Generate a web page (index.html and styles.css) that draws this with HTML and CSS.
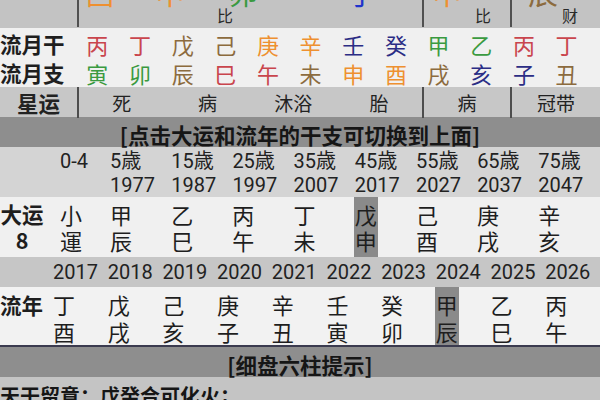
FILE: index.html
```html
<!DOCTYPE html>
<html lang="zh">
<head>
<meta charset="utf-8">
<title>八字排盘</title>
<link rel="stylesheet" href="styles.css">
</head>
<body>
<div class="page">
  <div class="top">
    <div class="tc"></div>
    <div class="tc">
      <span class="big orange t-a">酉</span>
      <span class="big orange t-b">申</span>
      <span class="ss t-c">比</span>
      <span class="big green t-d">卯</span>
      <span class="big blue t-e">子</span>
    </div>
    <div class="tc">
      <span class="big orange t-f">申</span>
      <span class="ss t-g">比</span>
    </div>
    <div class="tc last">
      <span class="big brown t-h">辰</span>
      <span class="ss t-i">财</span>
    </div>
  </div>

  <div class="ly ly1">
    <div class="lab">流月干</div>
    <span class="c red">丙</span><span class="c red">丁</span><span class="c brown">戊</span><span class="c brown">己</span>
    <span class="c orange">庚</span><span class="c orange">辛</span><span class="c navy">壬</span><span class="c navy">癸</span>
    <span class="c green">甲</span><span class="c green">乙</span><span class="c red">丙</span><span class="c red">丁</span>
  </div>
  <div class="ly ly2">
    <div class="lab">流月支</div>
    <span class="c green">寅</span><span class="c green">卯</span><span class="c brown">辰</span><span class="c red">巳</span>
    <span class="c red">午</span><span class="c brown">未</span><span class="c orange">申</span><span class="c orange">酉</span>
    <span class="c brown">戌</span><span class="c navy">亥</span><span class="c navy">子</span><span class="c brown">丑</span>
  </div>

  <div class="xy">
    <div class="xc xlab">星运</div>
    <div class="xc xmain"><span>死</span><span>病</span><span>沐浴</span><span>胎</span></div>
    <div class="xc"><span>病</span></div>
    <div class="xc last"><span>冠带</span></div>
  </div>

  <div class="bar bar1">[点击大运和流年的干支可切换到上面]</div>

  <div class="dy ages">
    <div class="dlab"></div>
    <div class="ac">0-4<br>&nbsp;</div>
    <div class="ac">5歳<br>1977</div>
    <div class="ac">15歳<br>1987</div>
    <div class="ac">25歳<br>1997</div>
    <div class="ac">35歳<br>2007</div>
    <div class="ac">45歳<br>2017</div>
    <div class="ac">55歳<br>2027</div>
    <div class="ac">65歳<br>2037</div>
    <div class="ac">75歳<br>2047</div>
  </div>

  <div class="dy dyrow">
    <div class="dlab blab">大运<br>8</div>
    <div class="gc"><span class="gz">小<br>運</span></div>
    <div class="gc"><span class="gz">甲<br>辰</span></div>
    <div class="gc"><span class="gz">乙<br>巳</span></div>
    <div class="gc"><span class="gz">丙<br>午</span></div>
    <div class="gc"><span class="gz">丁<br>未</span></div>
    <div class="gc"><span class="gz hl">戊<br>申</span></div>
    <div class="gc"><span class="gz">己<br>酉</span></div>
    <div class="gc"><span class="gz">庚<br>戌</span></div>
    <div class="gc"><span class="gz">辛<br>亥</span></div>
  </div>

  <div class="ln years">
    <div></div>
    <div class="yc">2017</div><div class="yc">2018</div><div class="yc">2019</div><div class="yc">2020</div><div class="yc">2021</div>
    <div class="yc">2022</div><div class="yc">2023</div><div class="yc">2024</div><div class="yc">2025</div><div class="yc">2026</div>
  </div>

  <div class="ln lnrow">
    <div class="nlab">流年</div>
    <div class="gc"><span class="gz gz2">丁<br>酉</span></div>
    <div class="gc"><span class="gz gz2">戊<br>戌</span></div>
    <div class="gc"><span class="gz gz2">己<br>亥</span></div>
    <div class="gc"><span class="gz gz2">庚<br>子</span></div>
    <div class="gc"><span class="gz gz2">辛<br>丑</span></div>
    <div class="gc"><span class="gz gz2">壬<br>寅</span></div>
    <div class="gc"><span class="gz gz2">癸<br>卯</span></div>
    <div class="gc"><span class="gz gz2 hl">甲<br>辰</span></div>
    <div class="gc"><span class="gz gz2">乙<br>巳</span></div>
    <div class="gc"><span class="gz gz2">丙<br>午</span></div>
  </div>

  <div class="bar bar2">[细盘六柱提示]</div>
  <div class="tip">天干留意：戊癸合可化火；</div>
</div>
</body>
</html>
```

FILE: styles.css
```css
* { box-sizing: border-box; margin: 0; padding: 0; }
html, body { background: #c4c4c4; }
body {
  width: 600px;
  height: 400px;
  overflow: hidden;
  font-family: Roboto, "Noto Sans CJK SC", sans-serif;
  color: #1e1e1e;
}
.page { width: 600px; }

.red { color: #c9454d; }
.green { color: #3a9a40; }
.brown { color: #8c6b3e; }
.orange { color: #ee9030; }
.navy { color: #2b2d85; }
.blue { color: #2034cc; }

/* top (cut) row */
.top {
  display: grid;
  grid-template-columns: 79px 345px 88px 88px;
  height: 28px;
  background: #c3c3c3;
  overflow: hidden;
}
.tc {
  display: flex;
  align-items: flex-start;
  height: 27px;
  border-right: 2px solid #505050;
}
.tc.last { border-right: none; }
.big {
  display: block;
  flex: none;
  width: 30px;
  text-align: center;
  font-family: "Noto Sans CJK SC", sans-serif;
  font-size: 30px;
  line-height: 30px;
  margin-top: -24px;
}
.ss {
  display: block;
  flex: none;
  width: 16px;
  text-align: center;
  font-family: "Noto Sans CJK SC", sans-serif;
  font-size: 16px;
  line-height: 16px;
  align-self: flex-end;
  margin-bottom: 4px;
  color: #2a2a2a;
}
.t-a { margin-left: 6px; }
.t-b { margin-left: 40px; }
.t-c { margin-left: 32px; }
.t-d { margin-left: -5px; }
.t-e { margin-left: 89px; }
.t-f { margin-left: 8px; }
.t-g { margin-left: 13px; }
.t-h { margin-left: 16px; }
.t-i { margin-left: 4px; }

/* 流月 rows */
.ly {
  display: grid;
  grid-template-columns: 76px repeat(12, 42.67px);
  align-items: center;
  background: #f0f0f0;
}
.ly1 { height: 30px; padding-top: 2px; }
.ly2 { height: 29px; }
.lab {
  font-family: "Noto Sans CJK SC", sans-serif;
  font-weight: 700;
  font-size: 21.5px;
  line-height: 28px;
  white-space: nowrap;
}
.ly .c {
  text-align: center;
  font-family: "Noto Sans CJK SC", sans-serif;
  font-size: 22px;
  line-height: 28px;
}

/* 星运 */
.xy {
  display: grid;
  grid-template-columns: 79px 345px 88px 88px;
  height: 30px;
  background: #c7c7c7;
}
.xc {
  display: flex;
  align-items: center;
  justify-content: center;
  border-right: 2px solid #4d4d4d;
  font-family: "Noto Sans CJK SC", sans-serif;
  font-size: 19px;
  color: #222;
}
.xc.last { border-right: none; }
.xlab { font-weight: 700; font-size: 21.5px; }
.xmain span { flex: 1; text-align: center; }

/* bars */
.bar {
  height: 30px;
  padding-top: 5px;
  background: #8e8e8e;
  text-align: center;
  font-family: "Noto Sans CJK SC", sans-serif;
  font-weight: 700;
  font-size: 21.5px;
  line-height: 26px;
  color: #161616;
}
.bar2 { height: 30px; }

/* 大运 */
.dy {
  display: grid;
  grid-template-columns: 55px 50px repeat(8, 61.2px);
}
.ages {
  height: 50px;
  background: #d4d4d4;
  padding-top: 2px;
}
.ac {
  padding-left: 5px;
  font-size: 20px;
  line-height: 24px;
  white-space: nowrap;
  color: #222;
}
.dyrow {
  height: 60px;
  background: #f0f0f0;
}
.dlab { padding-right: 11px; }
.blab {
  text-align: center;
  font-family: "Noto Sans CJK SC", sans-serif;
  font-weight: 700;
  font-size: 21.5px;
  line-height: 26px;
  padding-top: 4px;
}
.gc { padding-left: 4px; }
.gz {
  display: flex;
  flex-direction: column;
  justify-content: center;
  width: 24px;
  height: 100%;
  text-align: center;
  font-family: "Noto Sans CJK SC", sans-serif;
  font-size: 22px;
  line-height: 26px;
  color: #1e1e1e;
}
.gz2 { line-height: 27px; padding-top: 3px; }
.hl { background: #8a8a8a; }

/* 流年 */
.ln {
  display: grid;
  grid-template-columns: 48px repeat(10, 54.7px);
}
.years {
  height: 30px;
  background: #c6c6c6;
}
.yc {
  padding-left: 5px;
  font-size: 20px;
  line-height: 30px;
  color: #222;
}
.lnrow {
  height: 58px;
  background: #f2f2f2;
  border-bottom: 2px solid #3b3b4f;
  height: 60px;
}
.nlab {
  font-family: "Noto Sans CJK SC", sans-serif;
  font-weight: 700;
  font-size: 21.5px;
  line-height: 27px;
  padding-top: 4px;
  white-space: nowrap;
}

.tip {
  height: 30px;
  padding-top: 6px;
  background: #c4c4c4;
  font-family: "Noto Sans CJK SC", sans-serif;
  font-weight: 700;
  font-size: 20px;
  line-height: 26px;
  color: #161616;
  white-space: nowrap;
}
```
